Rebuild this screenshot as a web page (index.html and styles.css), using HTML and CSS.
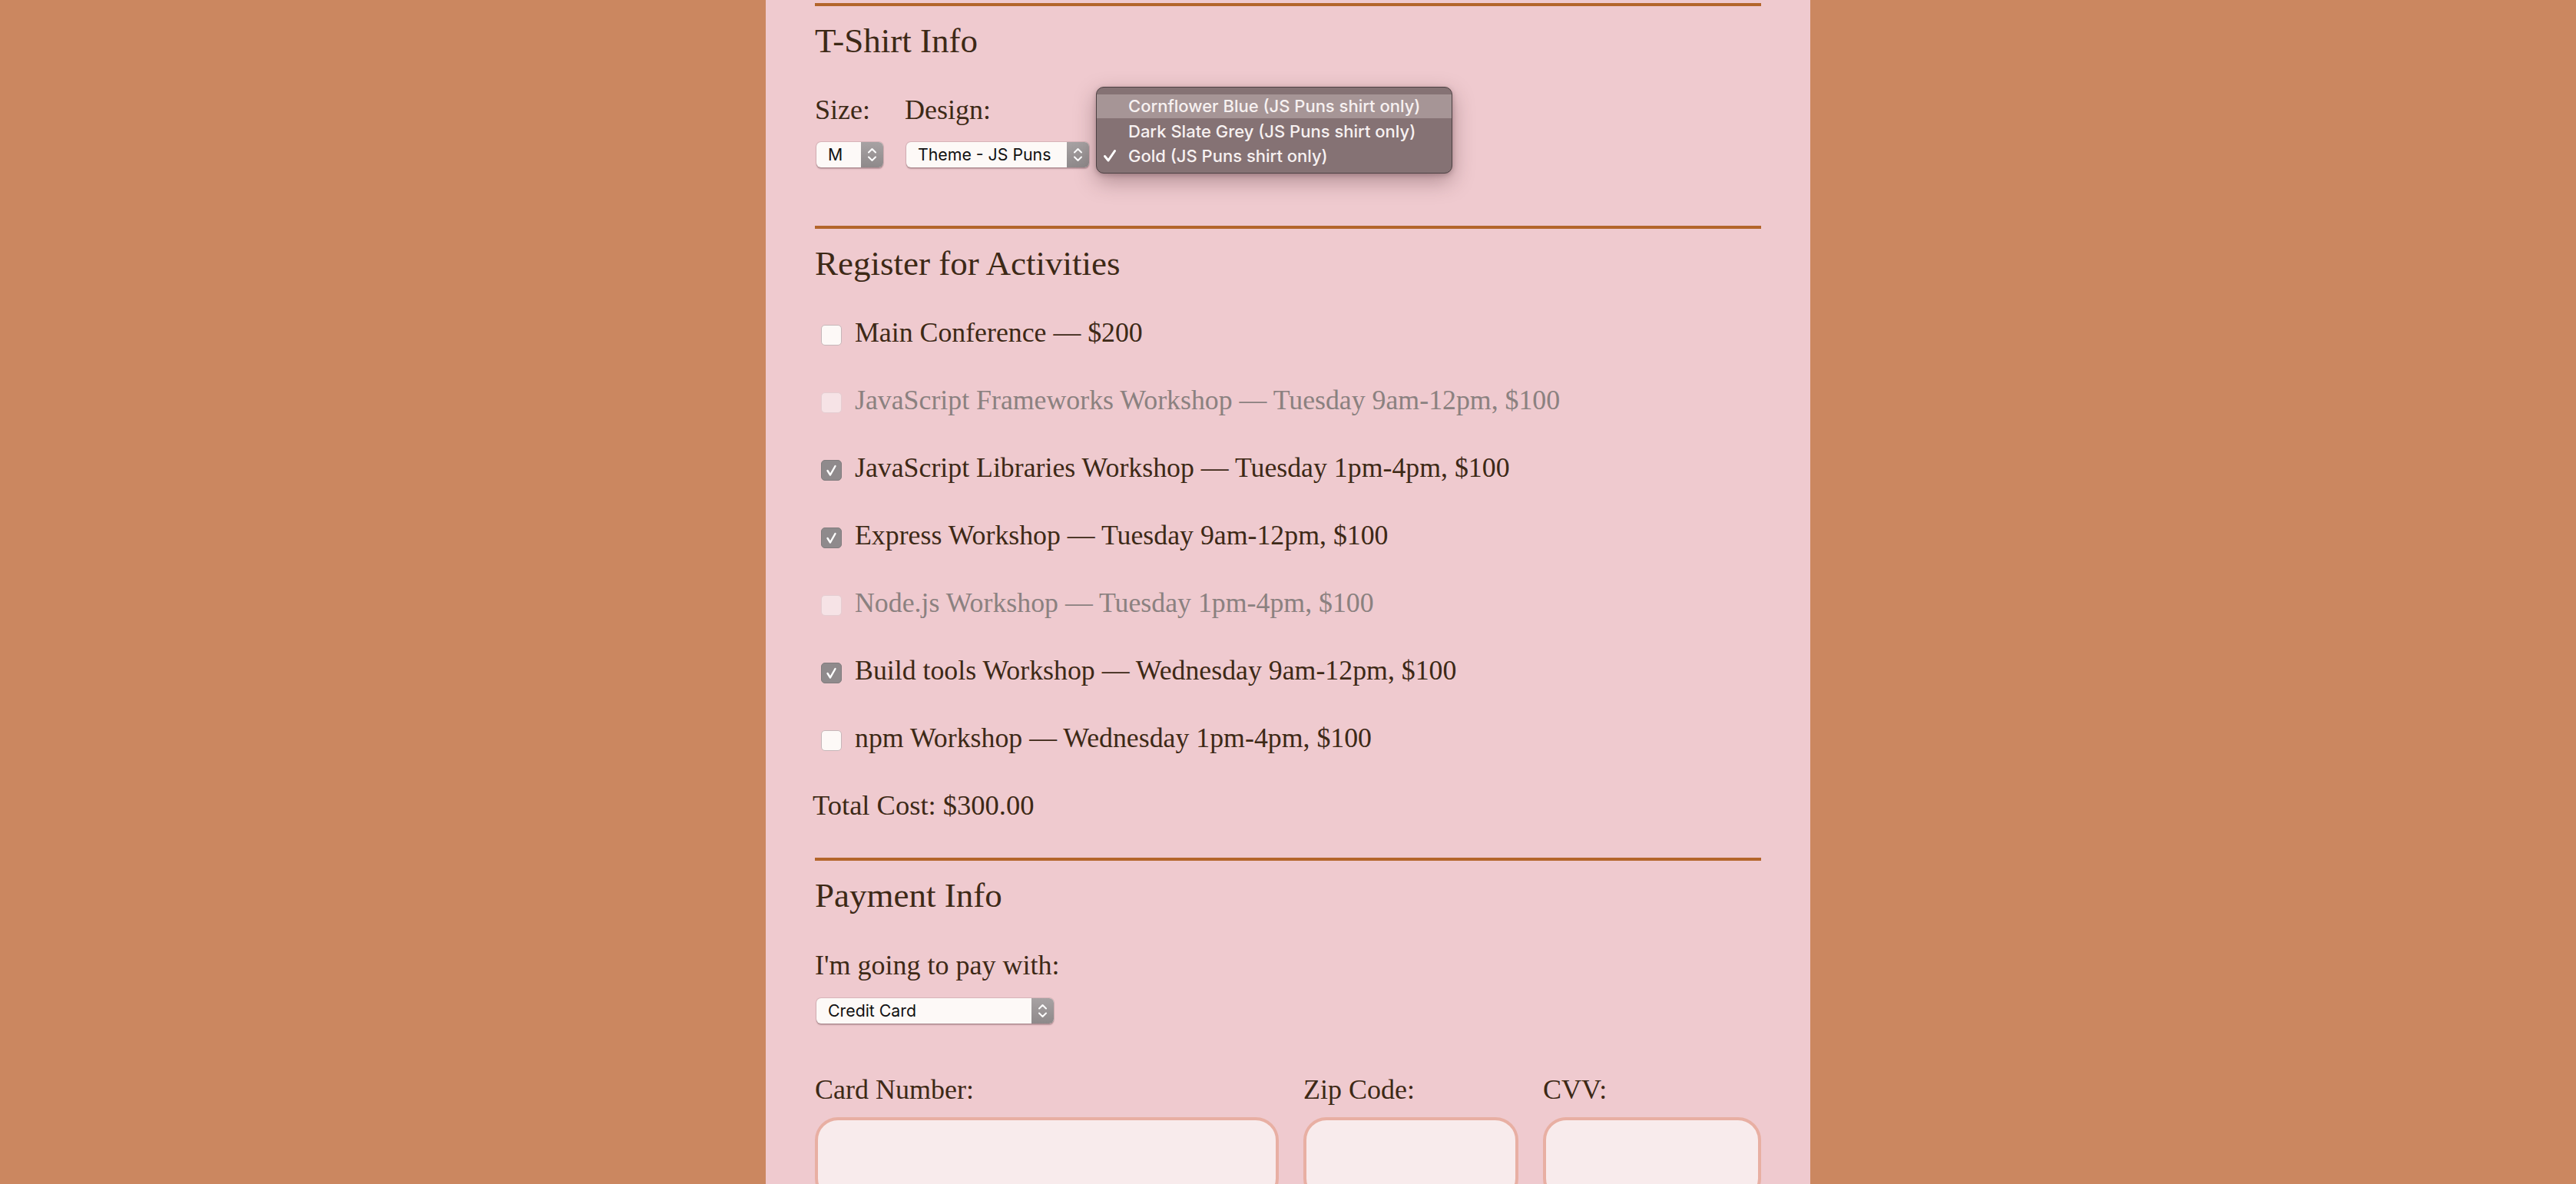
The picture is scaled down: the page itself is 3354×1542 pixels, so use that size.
FILE: index.html
```html
<!DOCTYPE html>
<html lang="en">
<head>
<meta charset="utf-8">
<title>Conference Registration</title>
<link rel="stylesheet" href="styles.css">
</head>
<body>
<main class="page">
  <section class="fieldset">
    <h2 class="legend">T-Shirt Info</h2>
    <div class="shirt-row">
      <div class="field field-size">
        <label class="label">Size:</label>
        <div class="select select-size"><span class="select-text">M</span><span class="select-arrows"><svg viewBox="0 0 29 33" width="29" height="33"><path d="M10 13.5 L14.5 9 L19 13.5" /><path d="M10 19.5 L14.5 24 L19 19.5" /></svg></span></div>
      </div>
      <div class="field field-design">
        <label class="label">Design:</label>
        <div class="select select-design"><span class="select-text">Theme - JS Puns</span><span class="select-arrows"><svg viewBox="0 0 29 33" width="29" height="33"><path d="M10 13.5 L14.5 9 L19 13.5" /><path d="M10 19.5 L14.5 24 L19 19.5" /></svg></span></div>
      </div>
    </div>
    <ul class="popup">
      <li class="popup-item is-hover">Cornflower Blue (JS Puns shirt only)</li>
      <li class="popup-item">Dark Slate Grey (JS Puns shirt only)</li>
      <li class="popup-item is-selected"><svg class="popup-check" viewBox="0 0 18 18" width="18" height="18"><path d="M2.5 9.5 L7 15 L15.5 2.5" /></svg>Gold (JS Puns shirt only)</li>
    </ul>
  </section>

  <section class="fieldset fieldset-activities">
    <h2 class="legend">Register for Activities</h2>
    <div class="activities">
      <div class="activity"><span class="box"></span>Main Conference — $200</div>
      <div class="activity is-disabled"><span class="box box-disabled"></span>JavaScript Frameworks Workshop — Tuesday 9am-12pm, $100</div>
      <div class="activity"><span class="box box-checked"><svg viewBox="0 0 27 27" width="27" height="27"><path d="M8.5 14 L12 19.5 L18.5 8" /></svg></span>JavaScript Libraries Workshop — Tuesday 1pm-4pm, $100</div>
      <div class="activity"><span class="box box-checked"><svg viewBox="0 0 27 27" width="27" height="27"><path d="M8.5 14 L12 19.5 L18.5 8" /></svg></span>Express Workshop — Tuesday 9am-12pm, $100</div>
      <div class="activity is-disabled"><span class="box box-disabled"></span>Node.js Workshop — Tuesday 1pm-4pm, $100</div>
      <div class="activity"><span class="box box-checked"><svg viewBox="0 0 27 27" width="27" height="27"><path d="M8.5 14 L12 19.5 L18.5 8" /></svg></span>Build tools Workshop — Wednesday 9am-12pm, $100</div>
      <div class="activity"><span class="box"></span>npm Workshop — Wednesday 1pm-4pm, $100</div>
      <div class="total">Total Cost: $300.00</div>
    </div>
  </section>

  <section class="fieldset">
    <h2 class="legend">Payment Info</h2>
    <label class="label label-pay">I'm going to pay with:</label>
    <div class="select select-pay"><span class="select-text">Credit Card</span><span class="select-arrows"><svg viewBox="0 0 29 33" width="29" height="33"><path d="M10 13.5 L14.5 9 L19 13.5" /><path d="M10 19.5 L14.5 24 L19 19.5" /></svg></span></div>
    <div class="card-grid">
      <div class="card-field">
        <label class="label">Card Number:</label>
        <div class="text-input"></div>
      </div>
      <div class="card-field">
        <label class="label">Zip Code:</label>
        <div class="text-input"></div>
      </div>
      <div class="card-field">
        <label class="label">CVV:</label>
        <div class="text-input"></div>
      </div>
    </div>
  </section>
</main>
</body>
</html>
```

FILE: styles.css
```css
html, body {
  margin: 0;
  padding: 0;
  overflow: hidden;
}

body {
  background: #cb8760;
  font-family: "Liberation Serif", "Times New Roman", serif;
  color: #3d2916;
}

.page {
  width: 1360px;
  margin: 0 auto;
  box-sizing: border-box;
  min-height: 1542px;
  background: #efcacf;
  padding: 4px 64px 0;
}

.fieldset {
  position: relative;
  border-top: 4px solid #b3652b;
  padding-top: 19px;
  padding-bottom: 76px;
}

.fieldset-activities {
  padding-bottom: 48px;
}

.legend {
  margin: 0;
  font-weight: normal;
  font-size: 45px;
  line-height: 52px;
}

.label {
  display: block;
  font-size: 36px;
  line-height: 40px;
  position: relative;
  top: 1px;
}

/* T-shirt */
.shirt-row {
  display: flex;
  gap: 28px;
  margin-top: 43px;
}

.field {
  display: flex;
  flex-direction: column;
}

.field .select {
  margin-top: 23px;
}

/* native-looking select */
.select {
  display: flex;
  height: 33px;
  margin-left: 2px;
  box-sizing: border-box;
  border-radius: 6px;
  background: #fdf9f7;
  box-shadow: 0 0 0 1px rgba(120, 90, 95, 0.18), 0 1.5px 1.5px rgba(90, 60, 65, 0.35);
  font-family: Inter, "Liberation Sans", sans-serif;
  font-size: 21.3px;
  color: #111;
  overflow: hidden;
}

.select-text {
  flex: 1;
  padding-left: 15px;
  line-height: 33px;
  white-space: nowrap;
}

.select-arrows {
  width: 29px;
  height: 33px;
  flex: none;
  background: linear-gradient(#a7a2a3, #8e898a);
}

.select-arrows svg {
  display: block;
}

.select-arrows path {
  fill: none;
  stroke: #ffffff;
  stroke-width: 2;
  stroke-linecap: round;
  stroke-linejoin: round;
}

.select-size { width: 87px; }
.select-design { width: 238px; }
.select-pay { width: 309px; }

/* open dropdown menu */
.popup {
  position: absolute;
  left: 366px;
  top: 105px;
  width: 464px;
  height: 113px;
  margin: 0;
  padding: 9px 0 0;
  box-sizing: border-box;
  list-style: none;
  background: #857274;
  border: 1px solid #4d4143;
  border-radius: 10px;
  box-shadow: 0 10px 28px rgba(60, 30, 35, 0.35), 0 2px 6px rgba(60, 30, 35, 0.25);
  font-family: Inter, "Liberation Sans", sans-serif;
  font-weight: 500;
  font-size: 22px;
  color: #f7f1f1;
  overflow: hidden;
}

.popup-item {
  position: relative;
  height: 32px;
  line-height: 32px;
  padding-left: 41px;
  white-space: nowrap;
}

.popup-item.is-hover {
  background: #a69596;
  height: 31px;
  line-height: 31px;
  margin-bottom: 1px;
}

.popup-check {
  position: absolute;
  left: 8px;
  top: 7px;
}

.popup-check path {
  fill: none;
  stroke: #ffffff;
  stroke-width: 3;
  stroke-linecap: round;
  stroke-linejoin: round;
}

/* activities */
.activities {
  display: flex;
  flex-direction: column;
  gap: 48px;
  margin-top: 44px;
}

.activity {
  display: flex;
  align-items: flex-start;
  font-size: 35.8px;
  line-height: 40px;
  white-space: nowrap;
}

.activity.is-disabled {
  color: #8b8180;
}

.box {
  width: 27px;
  height: 27px;
  flex: none;
  box-sizing: border-box;
  margin: 10px 17px 0 8px;
  border-radius: 5px;
  background: #fdf9f7;
  border: 1.5px solid #c6b7b9;
}

.box-disabled {
  background: #f6e3e6;
  border-color: #e5cdd1;
}

.box-checked {
  background: #8f8a8c;
  border-color: #817c7e;
  position: relative;
}

.box-checked svg {
  position: absolute;
  left: -1.5px;
  top: -1.5px;
}

.box-checked path {
  fill: none;
  stroke: #ffffff;
  stroke-width: 2.4;
  stroke-linecap: round;
  stroke-linejoin: round;
}

.total {
  font-size: 36.5px;
  line-height: 40px;
  margin-left: -3px;
}

/* payment */
.label-pay {
  margin-top: 44px;
}

.select-pay {
  margin-top: 24px;
}

.card-grid {
  display: grid;
  grid-template-columns: 604px 280px 284px;
  column-gap: 32px;
  margin-top: 65px;
}

.text-input {
  margin-top: 17px;
  height: 110px;
  box-sizing: border-box;
  border: 4px solid #e8afa3;
  border-radius: 30px;
  background: #f8ebec;
}
```
